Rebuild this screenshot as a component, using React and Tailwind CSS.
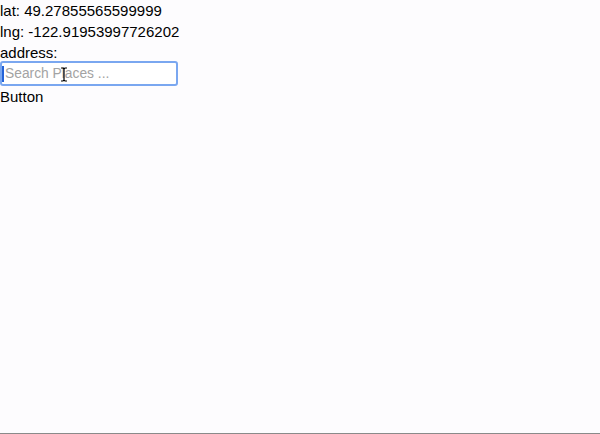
export default function App() {
  return (
    <div className="w-[600px] h-[434px] bg-[#fdfcfe] border-b border-[#8a8a8a] font-['Liberation_Sans',Arial,sans-serif] text-[15px] leading-[21px] text-black">
      <div>lat: 49.27855565599999</div>
      <div>lng: -122.91953997726202</div>
      <div>address:</div>
      <div className="relative -mt-[2px] w-[178px] h-[25px] rounded-[3px] border-2 border-[#7aa7f0] bg-white flex items-center">
        <div className="w-[2px] h-[16px] bg-[#2463d8]"></div>
        <span className="text-[#a3a3a3] text-[13.8px] ml-[1px]">Search Places ...</span>
        <svg className="absolute left-[58px] top-[4px]" width="8" height="15" viewBox="0 0 8 15">
          <path d="M1 1h2l1 1 1-1h2M4 2v11M1 14h2l1-1 1 1h2" stroke="#000" strokeWidth="1.2" fill="none" />
        </svg>
      </div>
      <div>Button</div>
    </div>
  );
}
